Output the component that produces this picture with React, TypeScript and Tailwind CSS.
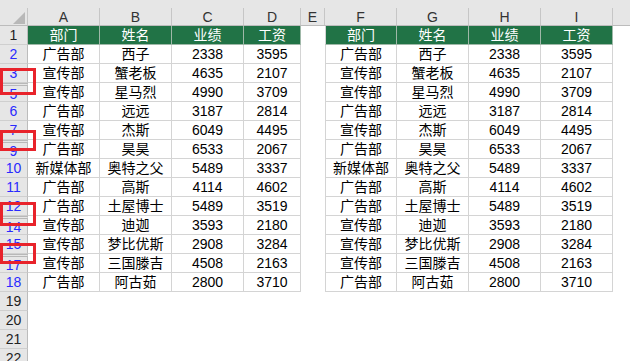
import { FC } from "react";

type Row = { n: number; cells: string[]; afterHidden?: boolean };

const cols = [
  { key: "A", w: "w-[72px]" },
  { key: "B", w: "w-[72px]" },
  { key: "C", w: "w-[72px]" },
  { key: "D", w: "w-[57px]" },
  { key: "E", w: "w-[24px]" },
  { key: "F", w: "w-[72px]" },
  { key: "G", w: "w-[72px]" },
  { key: "H", w: "w-[72px]" },
  { key: "I", w: "w-[72px]" },
];

const header = ["部门", "姓名", "业绩", "工资"];

const data: Row[] = [
  { n: 2, cells: ["广告部", "西子", "2338", "3595"] },
  { n: 3, cells: ["宣传部", "蟹老板", "4635", "2107"] },
  { n: 5, cells: ["宣传部", "星马烈", "4990", "3709"], afterHidden: true },
  { n: 6, cells: ["广告部", "远远", "3187", "2814"] },
  { n: 7, cells: ["宣传部", "杰斯", "6049", "4495"] },
  { n: 9, cells: ["广告部", "昊昊", "6533", "2067"], afterHidden: true },
  { n: 10, cells: ["新媒体部", "奥特之父", "5489", "3337"] },
  { n: 11, cells: ["广告部", "高斯", "4114", "4602"] },
  { n: 12, cells: ["广告部", "土屋博士", "5489", "3519"] },
  { n: 14, cells: ["宣传部", "迪迦", "3593", "2180"], afterHidden: true },
  { n: 15, cells: ["宣传部", "梦比优斯", "2908", "3284"] },
  { n: 17, cells: ["宣传部", "三国滕吉", "4508", "2163"], afterHidden: true },
  { n: 18, cells: ["广告部", "阿古茹", "2800", "3710"] },
];

const RowHead: FC<{ n: number; blue?: boolean; afterHidden?: boolean }> = ({ n, blue, afterHidden }) => (
  <div
    className={`w-[28px] h-[19px] shrink-0 bg-[#e6e6e6] border-r border-b border-r-[#bcbcbc] border-b-[#cfcfcf] flex items-center justify-center text-[14px] leading-none ${
      blue ? "text-[#2a2aff]" : "text-[#222]"
    } ${afterHidden ? "border-t-[3px] border-double border-t-[#b8b8b8]" : ""}`}
  >
    {n}
  </div>
);

const Cell: FC<{ w: string; text: string; head?: boolean; left?: boolean }> = ({ w, text, head, left }) => (
  <div
    className={`${w} h-[19px] shrink-0 flex items-center justify-center border-r border-b text-[14px] leading-none ${
      head ? "bg-[#217346] text-white border-[#9fb8a8]" : "bg-white text-black border-[#d4d4d4]"
    } ${left ? "border-l border-l-[#d4d4d4]" : ""}`}
  >
    {text}
  </div>
);

const TableRow: FC<{ cells: string[]; head?: boolean }> = ({ cells, head }) => (
  <>
    {cells.map((t, i) => (
      <Cell key={"a" + i} w={cols[i].w} text={t} head={head} />
    ))}
    <div className="w-[24px] h-[19px] shrink-0 bg-white" />
    {cells.map((t, i) => (
      <Cell key={"b" + i} w={cols[5 + i].w} text={t} head={head} left={i === 0} />
    ))}
  </>
);

const App: FC = () => {
  return (
    <div className="relative w-[630px] h-[361px] overflow-hidden bg-white font-['Liberation_Sans','Noto_Sans_CJK_SC',sans-serif]">
      {/* column letters */}
      <div className="flex h-[26px] bg-[#e6e6e6] border-b border-[#bcbcbc] pt-[8px]">
        <div className="w-[28px] h-[17px] shrink-0 border-r border-[#c6c6c6] relative">
          <svg width="28" height="17" className="absolute left-0 top-0">
            <polygon points="25,4 25,16 13,16" fill="#b8b8b8" />
          </svg>
        </div>
        {cols.map((c) => (
          <div
            key={c.key}
            className={`${c.w} h-[17px] shrink-0 border-r border-[#c6c6c6] flex items-center justify-center text-[14px] text-[#333] leading-none`}
          >
            {c.key}
          </div>
        ))}
        <div className="flex-1" />
      </div>

      {/* header row */}
      <div className="flex">
        <RowHead n={1} />
        <TableRow cells={header} head />
      </div>

      {data.map((r) => (
        <div key={r.n} className="flex">
          <RowHead n={r.n} blue afterHidden={r.afterHidden} />
          <TableRow cells={r.cells} />
        </div>
      ))}

      {[19, 20, 21, 22].map((n) => (
        <div key={n} className="flex">
          <RowHead n={n} />
        </div>
      ))}

      {/* red marks over hidden rows */}
      <div className="absolute left-0 top-[68px] w-[36px] h-[27px] border-[3px] border-[#e8232b]" />
      <div className="absolute left-0 top-[130px] w-[36px] h-[21px] border-[3px] border-[#e8232b]" />
      <div className="absolute left-0 top-[202px] w-[36px] h-[24px] border-[3px] border-[#e8232b]" />
      <div className="absolute left-0 top-[243px] w-[36px] h-[21px] border-[3px] border-[#e8232b]" />
    </div>
  );
};

export default App;
